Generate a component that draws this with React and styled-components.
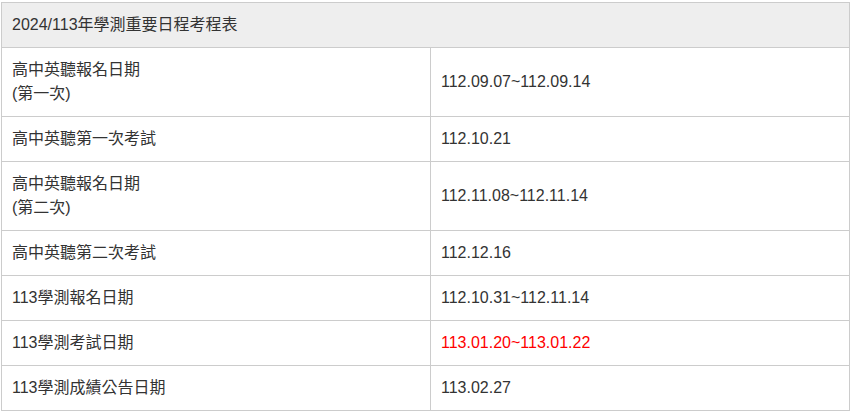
import React from "react";
import styled, { createGlobalStyle } from "styled-components";

const GlobalStyle = createGlobalStyle`
  body {
    margin: 0;
    background: #fff;
  }
`;

const Wrapper = styled.div`
  padding: 2px 0 0 1px;
  width: 849px;
`;

const Table = styled.table`
  width: 849px;
  border-collapse: collapse;
  table-layout: fixed;
  font-family: "Liberation Sans", Arial, "Noto Sans CJK TC", sans-serif;
  font-size: 16px;
  line-height: 24px;
  color: #333;
`;

const Column = styled.col`
  width: ${(props) => props.width || "auto"};
`;

const HeadCell = styled.th`
  background: #eee;
  border: 1px solid #ccc;
  padding: 10px;
  text-align: left;
  font-weight: 400;
`;

const Cell = styled.td`
  border: 1px solid #ccc;
  padding: 10px;
  vertical-align: middle;
  color: ${(props) => (props.highlight ? "#f00" : "#333")};
`;

const schedule = [
  { name: ["高中英聽報名日期", "(第一次)"], date: "112.09.07~112.09.14" },
  { name: ["高中英聽第一次考試"], date: "112.10.21" },
  { name: ["高中英聽報名日期", "(第二次)"], date: "112.11.08~112.11.14" },
  { name: ["高中英聽第二次考試"], date: "112.12.16" },
  { name: ["113學測報名日期"], date: "112.10.31~112.11.14" },
  { name: ["113學測考試日期"], date: "113.01.20~113.01.22", highlight: true },
  { name: ["113學測成績公告日期"], date: "113.02.27" },
];

const App = () => {
  return (
    <>
      <GlobalStyle />
      <Wrapper>
        <Table>
          <colgroup>
            <Column width="429px" />
            <Column />
          </colgroup>
          <thead>
            <tr>
              <HeadCell colSpan={2}>2024/113年學測重要日程考程表</HeadCell>
            </tr>
          </thead>
          <tbody>
            {schedule.map((row, index) => (
              <tr key={index}>
                <Cell>
                  {row.name.map((line, i) => (
                    <React.Fragment key={i}>
                      {i > 0 && <br />}
                      {line}
                    </React.Fragment>
                  ))}
                </Cell>
                <Cell highlight={row.highlight}>{row.date}</Cell>
              </tr>
            ))}
          </tbody>
        </Table>
      </Wrapper>
    </>
  );
};

export default App;
